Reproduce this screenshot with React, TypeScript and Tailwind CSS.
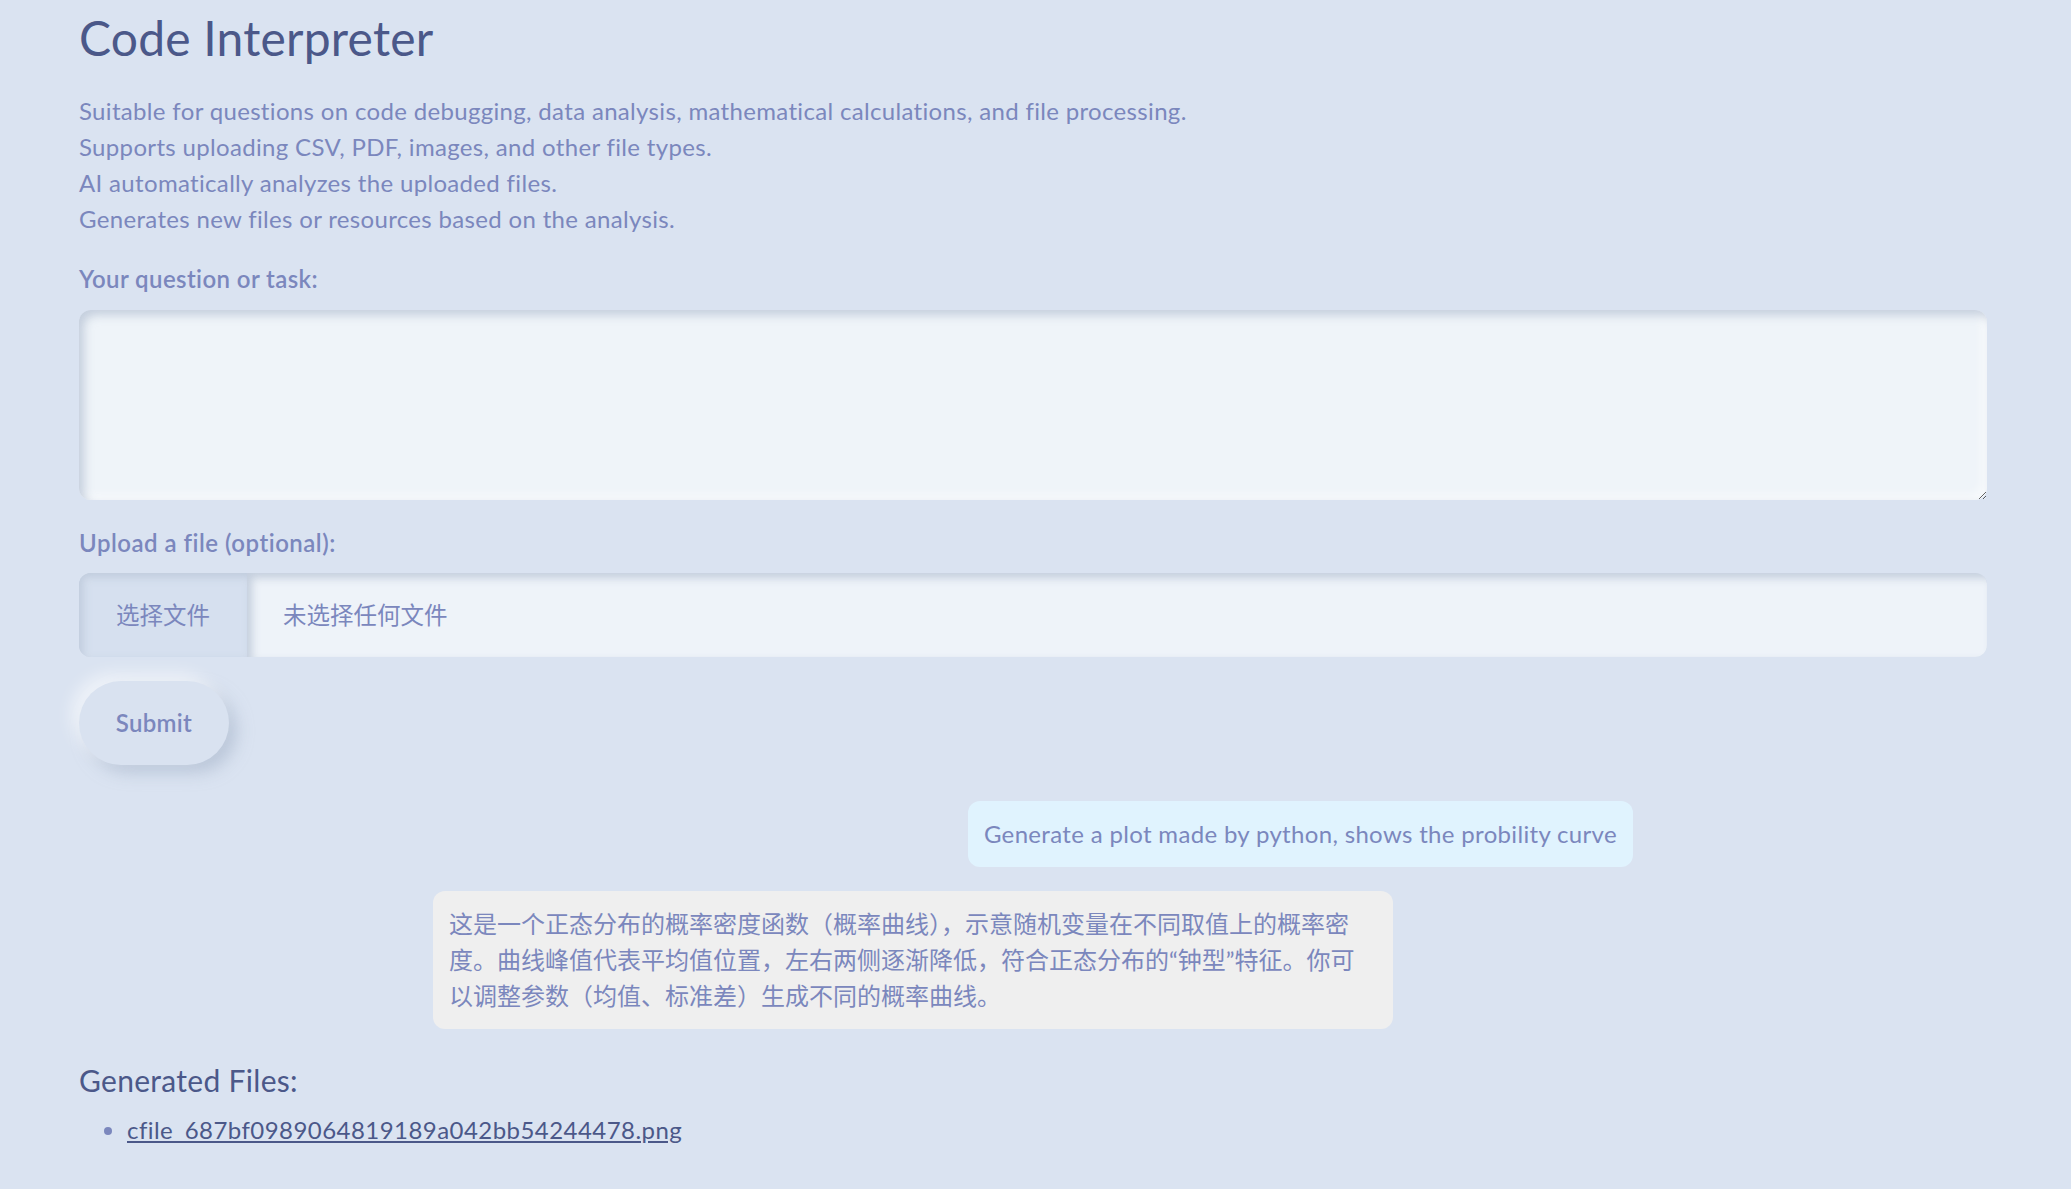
import React from "react";

export default function App() {
  return (
    <div className="min-h-screen w-full bg-[#dae3f1] pl-[79px] pr-[84px] pb-10 font-['Lato','Noto_Sans_CJK_SC',sans-serif] text-[#7b87bd]">
      <h1 className="pt-[10px] text-[48px] leading-[56px] font-normal tracking-[0.2px] text-[#4b5889]">Code Interpreter</h1>
      <div className="mt-[27px] text-[24px] leading-[36px] tracking-[0.33px]">
        <p>Suitable for questions on code debugging, data analysis, mathematical calculations, and file processing.</p>
        <p>Supports uploading CSV, PDF, images, and other file types.</p>
        <p>AI automatically analyzes the uploaded files.</p>
        <p>Generates new files or resources based on the analysis.</p>
      </div>
      <label className="mt-[24px] block text-[24px] leading-[36px] font-semibold tracking-[0.4px]">Your question or task:</label>
      <textarea className="mt-[13px] block h-[190px] w-full rounded-[12px] bg-[#eff4f9] p-4 text-[23px] text-[#4b5889] outline-none shadow-[inset_5px_5px_10px_rgba(163,177,198,0.55),inset_-5px_-5px_10px_rgba(255,255,255,0.6)]" />
      <label className="mt-[25px] block text-[24px] leading-[36px] font-semibold tracking-[0.5px]">Upload a file (optional):</label>
      <div className="mt-[12px] flex h-[84px] w-full overflow-hidden rounded-[12px] shadow-[inset_4px_4px_8px_rgba(163,177,198,0.5)]">
        <div className="flex w-[168px] items-center justify-center bg-[#d6e0ef] font-['Noto_Sans_CJK_SC',sans-serif] text-[23.5px] shadow-[inset_4px_4px_8px_rgba(163,177,198,0.45)]">
          选择文件
        </div>
        <div className="flex flex-1 items-center bg-[#eef3f9] pl-[36px] font-['Noto_Sans_CJK_SC',sans-serif] text-[23.5px] shadow-[inset_5px_5px_8px_rgba(163,177,198,0.55)]">
          未选择任何文件
        </div>
      </div>
      <button className="mt-[24px] flex h-[84px] w-[150px] items-center justify-center rounded-full bg-[#d9e2f0] text-[24px] font-semibold tracking-[0.3px] text-[#7b87bd] shadow-[-8px_-8px_16px_rgba(255,255,255,0.55),8px_8px_16px_rgba(163,177,198,0.55)]">
        Submit
      </button>
      <div className="mx-auto mt-[36px] flex w-[1200px] flex-col gap-[24px]">
        <div className="max-w-[80%] self-end rounded-[12px] bg-[#e0f3fe] px-4 py-[15px] text-[24px] leading-[36px] tracking-[0.33px]">
          Generate a plot made by python, shows the probility curve
        </div>
        <div className="max-w-[80%] self-start rounded-[12px] bg-[#efefef] px-4 py-[15px] text-[24px] leading-[36px]">
          这是一个正态分布的概率密度函数（概率曲线），示意随机变量在不同取值上的概率密度。曲线峰值代表平均值位置，左右两侧逐渐降低，符合正态分布的“钟型”特征。你可以调整参数（均值、标准差）生成不同的概率曲线。
        </div>
      </div>
      <h3 className="mt-[31px] text-[30px] leading-[40px] tracking-[0.3px] text-[#4b5889]">Generated Files:</h3>
      <ul className="mt-[12px] list-disc pl-[48px] text-[24px] leading-[36px] marker:text-[#7b87bd]">
        <li>
          <a href="#" className="text-[#4b5889] underline tracking-[0.45px]">cfile_687bf0989064819189a042bb54244478.png</a>
        </li>
      </ul>
    </div>
  );
}
